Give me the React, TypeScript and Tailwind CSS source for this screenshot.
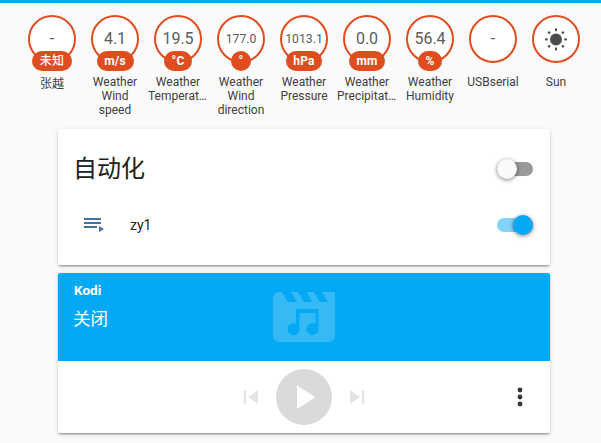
import React from 'react';

type Badge = { value?: string; unit?: string; pill?: string; name: string; small?: boolean; cjk?: boolean };

const badges: Badge[] = [
  { value: '-', unit: '未知', pill: 'w-10 font-medium', name: '张越', cjk: true },
  { value: '4.1', unit: 'm/s', pill: 'w-[37px] font-bold', name: 'Weather Wind speed' },
  { value: '19.5', unit: '°C', pill: 'w-7 font-bold', name: 'Weather Temperature' },
  { value: '177.0', unit: '°', pill: 'w-5 font-bold', name: 'Weather Wind direction', small: true },
  { value: '1013.1', unit: 'hPa', pill: 'w-9 font-bold', name: 'Weather Pressure', small: true },
  { value: '0.0', unit: 'mm', pill: 'w-9 font-bold', name: 'Weather Precipitation' },
  { value: '56.4', unit: '%', pill: 'w-6 font-bold', name: 'Weather Humidity' },
  { value: '-', name: 'USBserial' },
  { name: 'Sun' },
];

function SunIcon() {
  return (
    <svg viewBox="0 0 24 24" className="size-6 fill-[#4c4c4c]">
      <circle cx="12" cy="12.4" r="6" />
      {[0, 90, 180, 270].map((a) => (
        <rect key={a} x="11" y="1.4" width="2" height="2.8" transform={`rotate(${a} 12 12.4)`} />
      ))}
      {[45, 135, 225, 315].map((a) => (
        <rect key={a} x="10.9" y="1.5" width="2.2" height="2.4" transform={`rotate(${a} 12 12.4)`} />
      ))}
    </svg>
  );
}

function StateBadge({ value, unit, pill, name, small, cjk }: Badge) {
  return (
    <div className="flex w-[63px] flex-col items-center">
      <div className="relative flex size-12 items-center justify-center rounded-full border-2 border-[#df4c1e] bg-white text-[#5c5c5c]">
        {value ? <span className={small ? 'text-[12.2px]' : 'text-[16px]'}>{value}</span> : <SunIcon />}
        {unit && (
          <div className="absolute inset-x-0 top-[34px] flex justify-center">
            <span className={`flex h-5 shrink-0 items-center justify-center rounded-full bg-[#df4c1e] text-[12px] tracking-[0.2px] text-white ${pill}`}>
              {unit}
            </span>
          </div>
        )}
      </div>
      <div className={`w-[60px] overflow-hidden text-center text-[12px] leading-[14px] text-ellipsis text-[#404040] ${cjk ? 'mt-3.5' : 'mt-3'}`}>{name}</div>
    </div>
  );
}

function Toggle({ on }: { on?: boolean }) {
  return (
    <div className="flex h-5 w-9 items-center">
      <div className={`flex h-3.5 w-9 items-center rounded-full ${on ? 'justify-end bg-[#81d3fa]' : 'bg-[#999]'}`}>
        <div className={`size-5 shrink-0 rounded-full shadow-[0_1px_4px_rgba(0,0,0,0.5)] ${on ? 'bg-[#03a9f4]' : 'bg-[#fafafa]'}`} />
      </div>
    </div>
  );
}

const card = 'w-[492px] overflow-hidden rounded-[2px] bg-white shadow-[0_2px_2px_0_rgba(0,0,0,0.14),0_1px_5px_0_rgba(0,0,0,0.12),0_3px_1px_-2px_rgba(0,0,0,0.2)]';

export default function App() {
  return (
    <div className="h-[443px] w-[601px] overflow-hidden border-t-3 border-[#03a9f4] bg-[#fafafa] font-[Roboto,'Noto_Sans_CJK_SC',sans-serif] text-[#212121]">
      <div className="flex h-[126px] pt-3 pl-[20.5px]">
        {badges.map((b) => (
          <StateBadge key={b.name} {...b} />
        ))}
      </div>
      <div className="ml-[58px] flex flex-col gap-2">
        <section className={`${card} h-[136px] px-4`}>
          <div className="flex h-20 items-center justify-between pr-px">
            <h1 className="-ml-px text-[24px] leading-10 font-normal">自动化</h1>
            <Toggle />
          </div>
          <div className="flex h-8 items-center pr-px">
            <svg viewBox="0 0 24 24" className="ml-2 size-6 fill-[#44739e]">
              <path d="M19 9H2v2h17V9zm0-4H2v2h17V5zM2 15h13v-2H2v2zm15-2v6l5-3-5-3z" />
            </svg>
            <span className="ml-6 flex-1 text-[14px]">zy1</span>
            <Toggle on />
          </div>
        </section>
        <section className={`${card} h-40`}>
          <div className="relative h-22 bg-[#03a9f4] px-4 pt-[7px] text-white">
            <div className="text-[13.5px] leading-5 font-bold">Kodi</div>
            <div className="mt-[5px] -ml-px text-[17.5px] leading-7">关闭</div>
            <svg viewBox="0 0 62 50" className="absolute top-[19px] left-[215px] h-[50px] w-[62px] fill-white/20">
              <path fillRule="evenodd" d="M9 0l6 10h9L18 0h7l6 10h8L34 0h7l6 10h8L49 0h13v44a6 6 0 0 1-6 6H6a6 6 0 0 1-6-6V6a6 6 0 0 1 6-6ZM23 17v14.8A6 6 0 1 0 26.5 37V21h16v10.8A6 6 0 1 0 45.5 37V17Z" />
            </svg>
          </div>
          <div className="flex h-18 items-center">
            <div className="ml-[181px] flex items-center gap-2 fill-[#e4e4e4]">
              <svg viewBox="0 0 24 24" className="size-6"><path d="M5 5h2v14H5zM19 5v14L9.3 12z" /></svg>
              <svg viewBox="0 0 56 56" className="ml-[5px] size-14"><circle cx="28" cy="28" r="28" fill="#dadada" /><path d="M21 16.5v23.5L39.5 28.3z" fill="white" /></svg>
              <svg viewBox="0 0 24 24" className="ml-[5px] size-6"><path d="M5 5v14l9.7-7zM17 5h2v14h-2z" /></svg>
            </div>
            <svg viewBox="0 0 24 24" className="mr-[18px] ml-auto size-6 fill-[#333]">
              <circle cx="12" cy="5" r="2.4" /><circle cx="12" cy="12" r="2.4" /><circle cx="12" cy="19" r="2.4" />
            </svg>
          </div>
        </section>
      </div>
    </div>
  );
}
